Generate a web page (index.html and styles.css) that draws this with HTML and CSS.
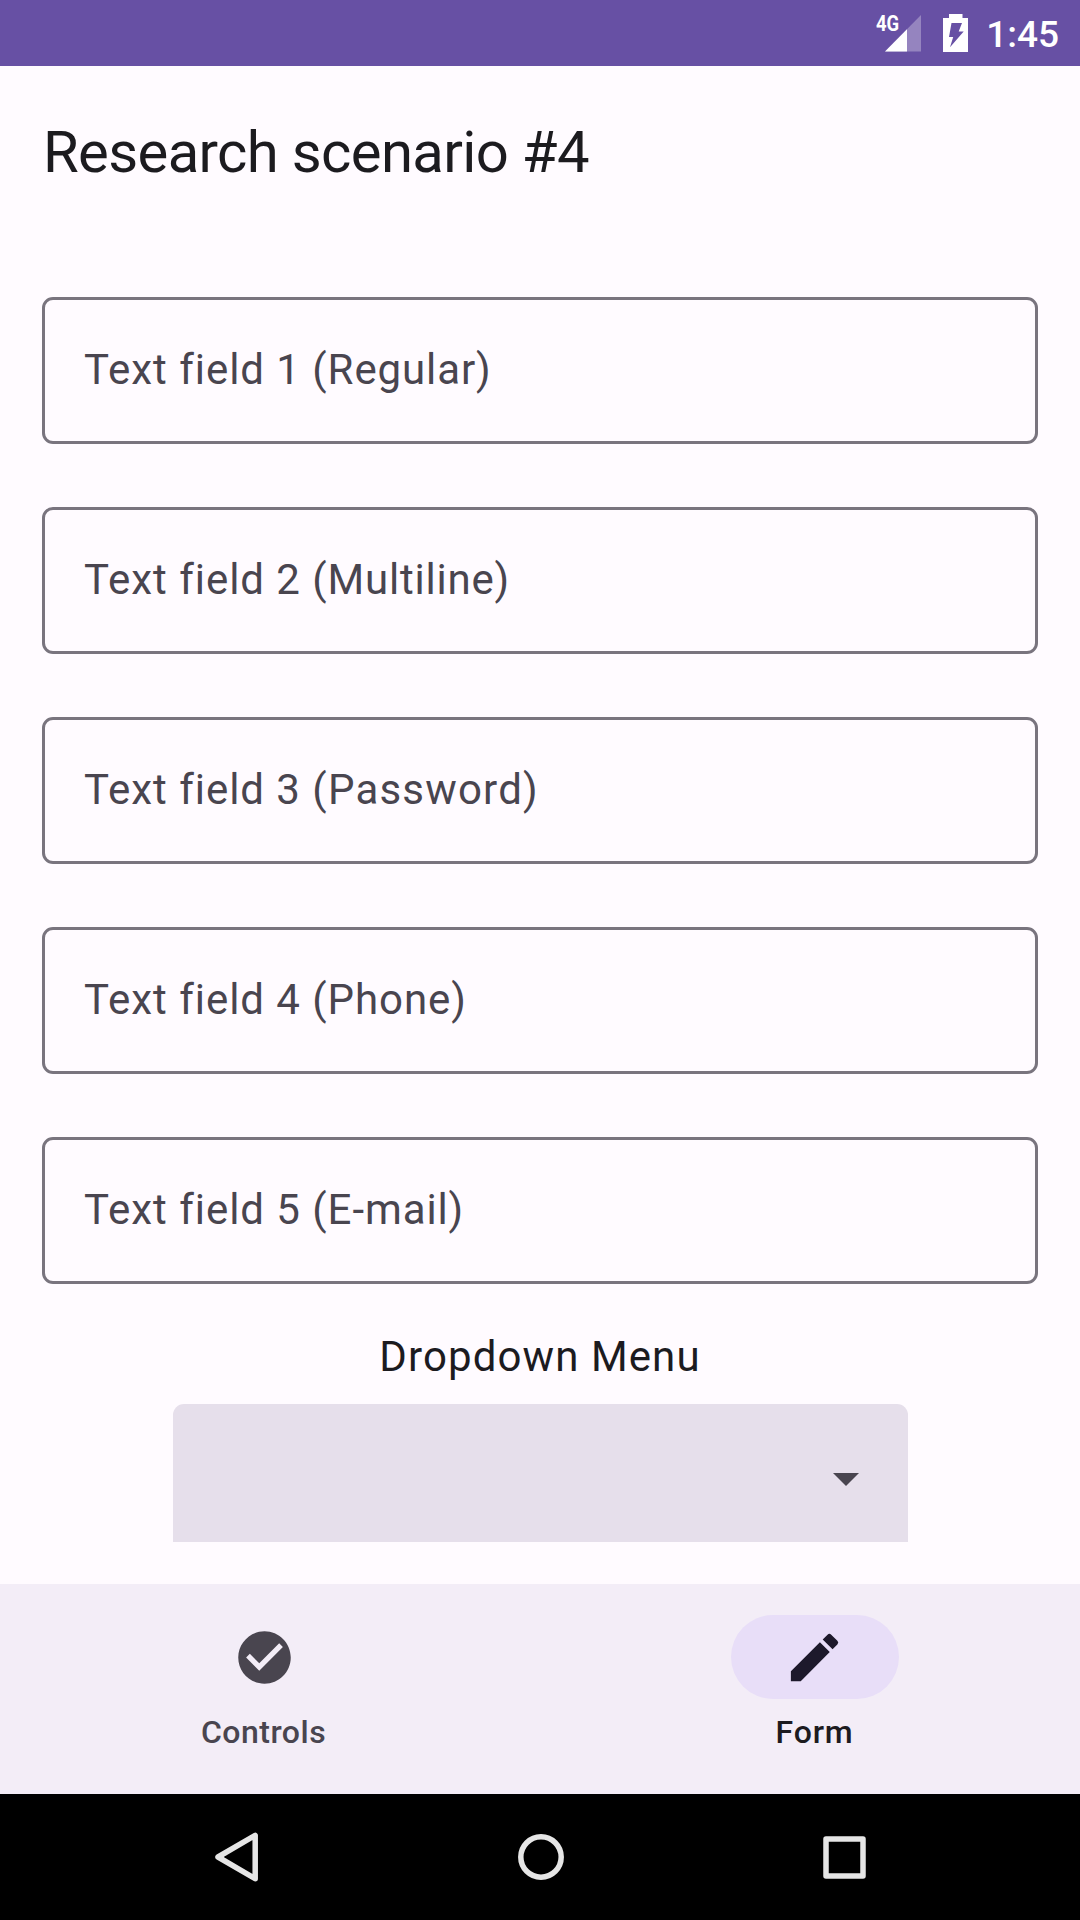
FILE: index.html
```html
<!DOCTYPE html>
<html lang="en">
<head>
<meta charset="utf-8">
<title>Research scenario #4</title>
<link rel="stylesheet" href="styles.css">
</head>
<body>
<header class="status-bar">
  <svg class="signal" width="38" height="38" viewBox="0 0 38 38"><path d="M37 1v36.5H1z" fill="#fff" opacity=".3"/><path d="M23 15.2v22.3H1z" fill="#fff"/></svg>
  <svg class="battery" width="25" height="38" viewBox="0 0 25 38"><path fill="#fff" fill-rule="evenodd" d="M6 0h13.5v4H25v34H0V4h6zM8.5 9H19l-3.3 8.6h5L7 33.3l3.2-10.3H6z"/></svg>
  <span class="network">4G</span>
  <span class="clock">1:45</span>
</header>
<main class="content">
  <h1 class="title">Research scenario #4</h1>
  <form class="fields">
    <div class="field">Text field 1 <span class="kind-regular">(Regular)</span></div>
    <div class="field">Text field 2 <span class="kind-multiline">(Multiline)</span></div>
    <div class="field">Text field 3 <span class="kind-password">(Password)</span></div>
    <div class="field">Text field 4 <span class="kind-phone">(Phone)</span></div>
    <div class="field">Text field 5 <span class="kind-email">(E-mail)</span></div>
  </form>
  <div class="menu-label">Dropdown Menu</div>
  <div class="dropdown"><svg width="26" height="13" viewBox="0 0 26 13"><path d="M0 0h26L13 13z" fill="#49454f"/></svg></div>
</main>
<nav class="tabs">
  <div class="tab"><span class="indicator"><svg width="63" height="63" viewBox="0 0 24 24"><path fill="#49454f" d="M12 2C6.48 2 2 6.48 2 12s4.48 10 10 10 10-4.48 10-10S17.52 2 12 2zm-2 15l-5-5 1.41-1.41L10 14.17l7.59-7.59L19 8l-9 9z"/></svg></span><span class="tab-label">Controls</span></div>
  <div class="tab tab-active"><span class="indicator"><svg width="63" height="63" viewBox="0 0 24 24"><path fill="#1d192b" d="M3 17.25V21h3.75L17.81 9.94l-3.75-3.75L3 17.25zM20.71 7.04a1 1 0 0 0 0-1.41l-2.34-2.34a1 1 0 0 0-1.41 0l-1.83 1.83 3.75 3.75 1.83-1.83z"/></svg></span><span class="tab-label">Form</span></div>
</nav>
<footer class="system-nav">
  <svg width="43" height="50" viewBox="0 0 43 50"><path d="M40.2 3.3v43.4L3 25z"/></svg>
  <svg width="46" height="46" viewBox="0 0 46 46"><circle cx="23" cy="23" r="20.2"/></svg>
  <svg width="43" height="43" viewBox="0 0 43 43"><rect x="3" y="3" width="37" height="37"/></svg>
</footer>
</body>
</html>
```
FILE: styles.css
```css
* { box-sizing: border-box; }
body { margin: 0; height: 1920px; display: flex; flex-direction: column; overflow: hidden; background: #fffbff; color: #1c1b1f; font-family: Roboto, sans-serif; }
.status-bar { position: relative; height: 66px; flex: none; background: #6750a4; color: #fff; display: flex; justify-content: flex-end; padding: 14px 21px 0 0; }
.battery { margin: 0 18px 0 21px; }
.network { position: absolute; left: 876px; top: 11px; font-size: 22px; line-height: 26px; font-weight: 700; transform: scaleX(.84); transform-origin: left; }
.clock { width: 73px; text-align: right; font-size: 37px; line-height: 42px; font-weight: 500; }
.content { height: 1518px; flex: none; padding: 50px 42px 0; }
.title { margin: 0 0 109px 1px; font-size: 58px; line-height: 72px; font-weight: 400; letter-spacing: -.64px; }
.fields { display: flex; flex-direction: column; gap: 63px; }
.field { height: 147px; border: 3px solid #79747e; border-radius: 11px; padding: 0 39px; font-size: 42px; line-height: 139px; letter-spacing: .97px; color: #49454f; }
.kind-regular { letter-spacing: .9px; }
.kind-multiline { letter-spacing: .8px; }
.kind-password { letter-spacing: 1.2px; }
.kind-phone { letter-spacing: .9px; }
.kind-email { letter-spacing: .9px; }
.menu-label { margin-top: 41px; text-align: center; font-size: 42px; line-height: 63px; letter-spacing: 1.1px; }
.dropdown { width: 735px; height: 138px; margin: 16px auto 0; background: #e6dfeb; border-radius: 11px 11px 0 0; padding: 69px 49px 0 0; display: flex; justify-content: flex-end; }
.tabs { height: 210px; flex: none; background: #f3edf7; display: flex; justify-content: space-between; padding-right: 1px; }
.tab { width: 529px; padding-top: 31px; display: flex; flex-direction: column; align-items: center; color: #49454f; }
.indicator { width: 168px; height: 84px; border-radius: 42px; display: flex; align-items: center; justify-content: center; }
.tab-active { color: #1c1b1f; }
.tab-active .indicator { background: #e8def8; }
.tab-label { margin-top: 12px; padding-right: 2px; font-size: 32px; line-height: 42px; font-weight: 500; letter-spacing: .5px; }
.tab-active .tab-label { padding-right: 0; letter-spacing: .8px; }
.system-nav { height: 126px; flex: none; background: #000; display: flex; align-items: center; justify-content: space-between; padding: 0 214px 0 215px; }
.system-nav svg { fill: none; stroke: #e6e6e6; stroke-width: 5.5; stroke-linejoin: round; }
```
